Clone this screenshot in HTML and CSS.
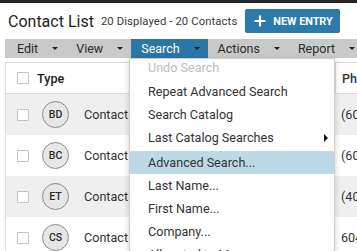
FILE: index.html
```html
<!DOCTYPE html>
<html>
<head>
<meta charset="utf-8">
<link rel="stylesheet" href="styles.css">
</head>
<body>
<div class="topbar"></div>
<header class="head">
  <h1 class="title">Contact List</h1>
  <span class="count">20 Displayed - 20 Contacts</span>
  <button class="new-entry"><svg class="plus" width="12" height="12" viewBox="0 0 12 12"><path d="M6 0.5V11.5M0.5 6H11.5" stroke="#fff" stroke-width="2.2" fill="none"/></svg><span>NEW ENTRY</span></button>
</header>
<nav class="menubar">
  <div class="mitem">Edit<i class="caret"></i></div>
  <div class="mitem">View<i class="caret"></i></div>
  <div class="mitem active">Search<i class="caret"></i></div>
  <div class="mitem">Actions<i class="caret"></i></div>
  <div class="mitem">Report<i class="caret"></i></div>
</nav>
<section class="card">
  <div class="row header">
    <div class="c-check"><span class="box"></span></div>
    <div class="c-type">Type</div>
    <div class="c-name"></div>
    <div class="c-phone">Phone</div>
  </div>
  <div class="row alt">
    <div class="c-check"><span class="box"></span></div>
    <div class="c-type"><span class="avatar">BD</span></div>
    <div class="c-name">Contact</div>
    <div class="c-phone">(604) 555-0101</div>
  </div>
  <div class="row">
    <div class="c-check"><span class="box"></span></div>
    <div class="c-type"><span class="avatar">BC</span></div>
    <div class="c-name">Contact</div>
    <div class="c-phone">(604) 555-0102</div>
  </div>
  <div class="row alt">
    <div class="c-check"><span class="box"></span></div>
    <div class="c-type"><span class="avatar">ET</span></div>
    <div class="c-name">Contact</div>
    <div class="c-phone">(403) 555-0103</div>
  </div>
  <div class="row">
    <div class="c-check"><span class="box"></span></div>
    <div class="c-type"><span class="avatar">CS</span></div>
    <div class="c-name">Contact</div>
    <div class="c-phone">604-555-0104</div>
  </div>
</section>
<ul class="dropdown">
  <li class="ditem undo disabled">Undo Search</li>
  <li class="ditem">Repeat Advanced Search</li>
  <li class="ditem">Search Catalog</li>
  <li class="ditem sub">Last Catalog Searches<i class="arrow"></i></li>
  <li class="ditem hl">Advanced Search...</li>
  <li class="ditem">Last Name...</li>
  <li class="ditem">First Name...</li>
  <li class="ditem">Company...</li>
  <li class="ditem">Allocated to Me</li>
</ul>
</body>
</html>
```
FILE: styles.css
```css
html, body {
  margin: 0;
  padding: 0;
  background: #fff;
  overflow: hidden;
  width: 357px;
  height: 251px;
  font-family: Roboto, "Liberation Sans", sans-serif;
  color: #333;
}
.topbar {
  height: 3px;
  background: #262626;
}
.head {
  display: flex;
  align-items: center;
  height: 36px;
  padding-left: 8px;
  white-space: nowrap;
}
.title {
  margin: 0;
  font-size: 16px;
  font-weight: 400;
  color: #1e1e1e;
}
.count {
  margin-left: 7px;
  font-size: 11.3px;
  color: #3a3a3a;
  letter-spacing: 0.1px;
}
.new-entry {
  margin-left: 8px;
  display: flex;
  align-items: center;
  width: 95px;
  height: 24px;
  padding: 0 0 0 9px;
  border: none;
  border-radius: 2px;
  background: #2c79ab;
  color: #fff;
  font-family: Roboto, "Liberation Sans", sans-serif;
  font-size: 10.8px;
  font-weight: 700;
}
.plus {
  margin-right: 7px;
}
.menubar {
  display: flex;
  margin-left: 5px;
  padding-left: 2px;
  height: 19px;
  background: #c9c9c9;
  overflow: hidden;
  white-space: nowrap;
}
.mitem {
  display: flex;
  align-items: center;
  padding: 0 8px 0 10px;
  font-size: 12.5px;
  color: #2a2a2a;
}
.mitem.active {
  background: #2b76a6;
  color: #fff;
}
.caret {
  display: inline-block;
  margin-left: 14px;
  width: 0;
  height: 0;
  border-left: 3px solid transparent;
  border-right: 3px solid transparent;
  border-top: 3px solid #1e1e1e;
}
.mitem.active .caret {
  border-top-color: #1a1a1a;
}
.card {
  margin: 4px 0 0 5px;
  border: 1px solid #dcdcdc;
  border-right: none;
  box-shadow: 0 0 2px rgba(0, 0, 0, 0.08);
}
.row {
  display: flex;
  align-items: center;
  height: 41px;
  font-size: 12.6px;
  white-space: nowrap;
}
.row.header {
  height: 30px;
  border-bottom: 1px solid #dedede;
  font-weight: 500;
  color: #222;
}
.row.alt {
  background: #efefef;
}
.c-check {
  width: 30px;
  flex: none;
  display: flex;
}
.box {
  margin-left: 11px;
  width: 10px;
  height: 10px;
  border: 1px solid #c4c4c4;
  background: #fff;
  border-radius: 1px;
}
.c-type {
  width: 48px;
  flex: none;
  padding-left: 1px;
  box-sizing: border-box;
}
.avatar {
  margin-left: 5px;
  display: flex;
  align-items: center;
  justify-content: center;
  width: 25px;
  height: 25px;
  border: 1px solid #8a8a8a;
  border-radius: 50%;
  background: #e6e6e6;
  font-size: 10.5px;
  font-weight: 500;
  color: #2a2a2a;
}
.c-name {
  width: 251px;
  flex: none;
  color: #333;
}
.c-phone {
  flex: none;
  padding-left: 6px;
  color: #333;
}
.row.header .c-phone {
  align-self: stretch;
  display: flex;
  align-items: center;
  border-left: 1px solid #dedede;
}
.dropdown {
  position: absolute;
  left: 129px;
  top: 58px;
  width: 204px;
  margin: 0;
  padding: 0;
  list-style: none;
  background: #fff;
  border: 1px solid #d0d0d0;
  box-shadow: 0 2px 6px rgba(0, 0, 0, 0.2);
  font-size: 12.6px;
  color: #333;
}
.ditem {
  position: relative;
  height: 23px;
  line-height: 23px;
  padding-left: 18px;
  white-space: nowrap;
}
.ditem.undo {
  height: 18px;
  line-height: 18px;
  margin-bottom: 3px;
}
.ditem.disabled {
  color: #bdbdbd;
}
.ditem.sub {
  margin-bottom: 2px;
}
.ditem.hl {
  background: #bdd8e6;
}
.arrow {
  position: absolute;
  right: 6px;
  top: 8px;
  width: 0;
  height: 0;
  border-top: 4px solid transparent;
  border-bottom: 4px solid transparent;
  border-left: 4px solid #111;
}
```
